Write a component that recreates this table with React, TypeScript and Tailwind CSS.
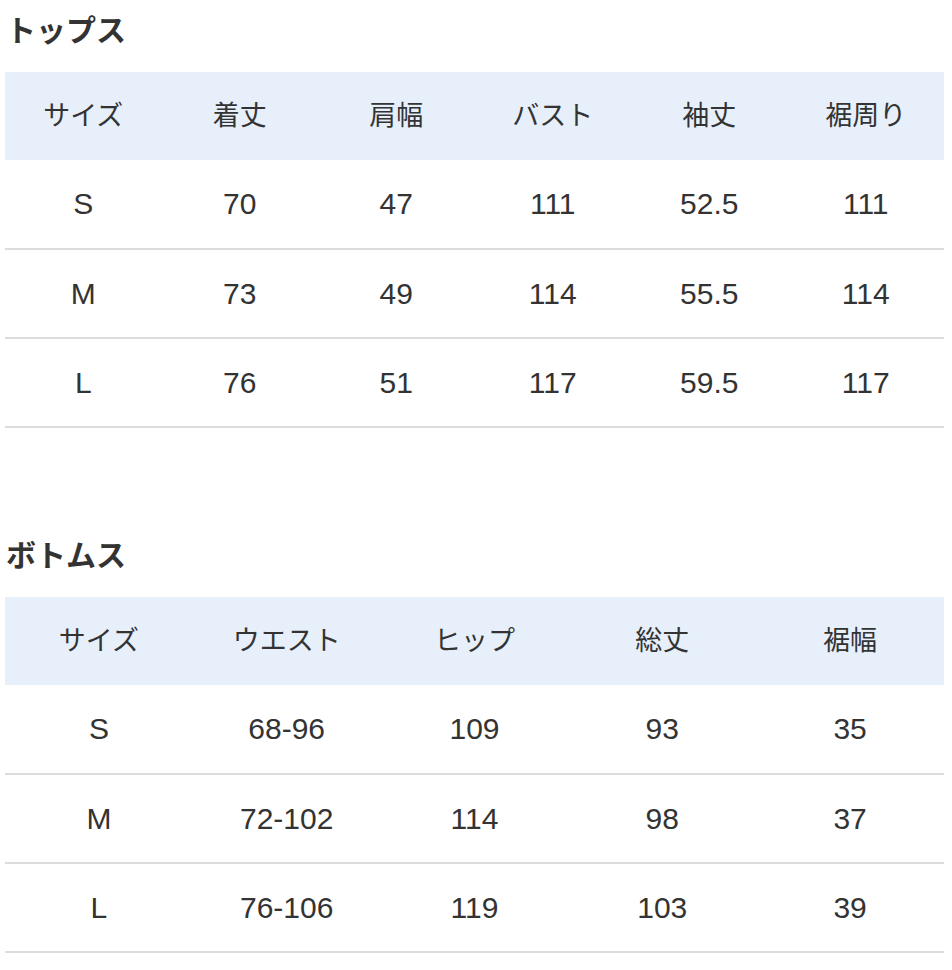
import React from 'react'

const font = { fontFamily: '"Liberation Sans", "Noto Sans CJK JP", sans-serif' }

interface SizeTableProps {
  title: string
  headers: string[]
  rows: string[][]
}

function SizeTable({ title, headers, rows }: SizeTableProps) {
  return (
    <section>
      <h2 className="text-[30px] leading-[34px] font-bold text-[#333] pl-[1px]">{title}</h2>
      <table className="w-full table-fixed border-collapse mt-[24px] text-[#333]">
        <thead>
          <tr className="bg-[#e7effa] h-[88px]">
            {headers.map(h => (
              <th key={h} className="font-normal text-[27px] text-center align-middle">{h}</th>
            ))}
          </tr>
        </thead>
        <tbody>
          {rows.map(r => (
            <tr key={r[0]} className="h-[89px] border-b-2 border-[#dcdcdc]">
              {r.map((c, i) => (
                <td key={i} className="text-[30px] leading-[36px] text-center align-middle">{c}</td>
              ))}
            </tr>
          ))}
        </tbody>
      </table>
    </section>
  )
}

export default function App() {
  return (
    <div className="bg-white w-[952px] h-[970px] pl-[5px] pr-[8px] pt-[14px]" style={font}>
      <SizeTable
        title="トップス"
        headers={['サイズ', '着丈', '肩幅', 'バスト', '袖丈', '裾周り']}
        rows={[
          ['S', '70', '47', '111', '52.5', '111'],
          ['M', '73', '49', '114', '55.5', '114'],
          ['L', '76', '51', '117', '59.5', '117'],
        ]}
      />
      <div className="h-[111px]" />
      <SizeTable
        title="ボトムス"
        headers={['サイズ', 'ウエスト', 'ヒップ', '総丈', '裾幅']}
        rows={[
          ['S', '68-96', '109', '93', '35'],
          ['M', '72-102', '114', '98', '37'],
          ['L', '76-106', '119', '103', '39'],
        ]}
      />
    </div>
  )
}
